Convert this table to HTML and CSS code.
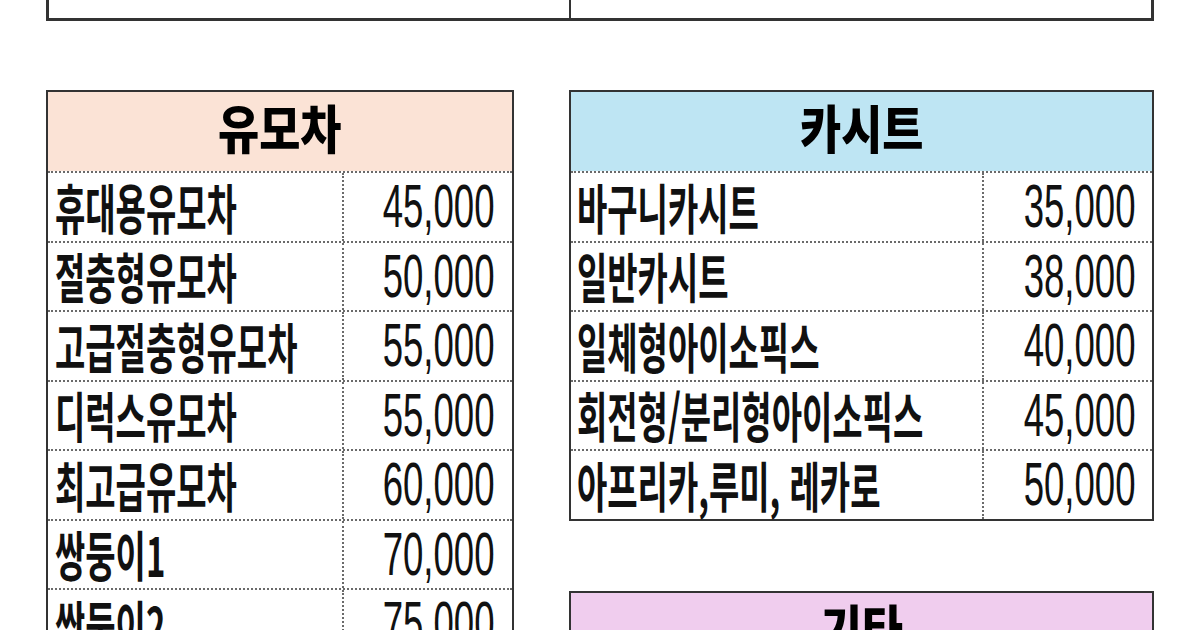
FILE: index.html
```html
<!DOCTYPE html>
<html lang="ko">
<head>
<meta charset="utf-8">
<title>가격표</title>
<link rel="stylesheet" href="styles.css">
</head>
<body>
<div class="sheet">
  <div class="topbox">
    <div class="tb-cell"></div>
    <div class="tb-cell tb-right"></div>
  </div>
  <div class="cols">
    <div class="col">
      <div class="tbl tbl-left">
        <div class="head head-peach"><span class="ht">유모차</span></div>
        <div class="row"><div class="lab"><span class="lt">휴대용유모차</span></div><div class="val"><span class="vt">45,000</span></div></div>
        <div class="row"><div class="lab"><span class="lt">절충형유모차</span></div><div class="val"><span class="vt">50,000</span></div></div>
        <div class="row"><div class="lab"><span class="lt">고급절충형유모차</span></div><div class="val"><span class="vt">55,000</span></div></div>
        <div class="row"><div class="lab"><span class="lt">디럭스유모차</span></div><div class="val"><span class="vt">55,000</span></div></div>
        <div class="row"><div class="lab"><span class="lt">최고급유모차</span></div><div class="val"><span class="vt">60,000</span></div></div>
        <div class="row"><div class="lab"><span class="lt">쌍둥이1</span></div><div class="val"><span class="vt">70,000</span></div></div>
        <div class="row"><div class="lab"><span class="lt">쌍둥이2</span></div><div class="val"><span class="vt">75,000</span></div></div>
      </div>
    </div>
    <div class="col">
      <div class="tbl tbl-right">
        <div class="head head-blue"><span class="ht">카시트</span></div>
        <div class="row"><div class="lab"><span class="lt">바구니카시트</span></div><div class="val"><span class="vt">35,000</span></div></div>
        <div class="row"><div class="lab"><span class="lt">일반카시트</span></div><div class="val"><span class="vt">38,000</span></div></div>
        <div class="row"><div class="lab"><span class="lt">일체형아이소픽스</span></div><div class="val"><span class="vt">40,000</span></div></div>
        <div class="row"><div class="lab"><span class="lt">회전형/분리형아이소픽스</span></div><div class="val"><span class="vt">45,000</span></div></div>
        <div class="row"><div class="lab"><span class="lt">아프리카,루미, 레카로</span></div><div class="val"><span class="vt">50,000</span></div></div>
      </div>
      <div class="tbl tbl-right tbl-etc">
        <div class="head head-purple"><span class="ht">기타</span></div>
      </div>
    </div>
  </div>
</div>
</body>
</html>
```

FILE: styles.css
```css
html, body {
  margin: 0;
  padding: 0;
  background: #ffffff;
}
body {
  width: 1200px;
  height: 630px;
  overflow: hidden;
  font-family: "Noto Sans CJK KR", "Liberation Sans", sans-serif;
  color: #111;
}
.sheet {
  padding: 0 46px;
}
.topbox {
  height: 21px;
  box-sizing: border-box;
  border: 3px solid #333;
  border-top: none;
  display: grid;
  grid-template-columns: 520px 1fr;
}
.tb-right {
  border-left: 2px solid #333;
}
.cols {
  margin-top: 69px;
  display: grid;
  grid-template-columns: 468px 585px;
  column-gap: 55px;
  align-items: start;
}
.col {
  display: flex;
  flex-direction: column;
  min-width: 0;
}
.tbl {
  border: 2px solid #333;
  background: #fff;
}
.tbl-etc {
  margin-top: 70px;
}
.head {
  height: 79px;
  box-sizing: border-box;
  padding-bottom: 10px;
  display: flex;
  align-items: center;
  justify-content: center;
}
.head-peach { background: #fbe3d6; }
.head-blue { background: #bee5f3; }
.head-purple { background: #f0cdee; }
.ht {
  display: inline-block;
  font-size: 52px;
  font-weight: 900;
  line-height: 1;
  transform: scaleX(0.86);
  color: #000;
}
.row {
  height: 69.5px;
  box-sizing: border-box;
  border-top: 2px dotted #6a6a6a;
  display: grid;
}
.tbl-left .row { grid-template-columns: 296px minmax(0, 1fr); }
.tbl-right .row { grid-template-columns: 413px minmax(0, 1fr); }
.lab {
  border-right: 2px dotted #6a6a6a;
  display: flex;
  align-items: center;
  padding-left: 7px;
  min-width: 0;
  white-space: nowrap;
}
.tbl-right .lab { padding-left: 6px; }
.val {
  display: flex;
  align-items: center;
  justify-content: flex-end;
  padding-right: 17px;
  min-width: 0;
  white-space: nowrap;
}
.tbl-right .val { padding-right: 16px; }
.lt {
  display: inline-block;
  font-size: 54px;
  font-weight: 700;
  line-height: 1;
  transform: scaleX(0.61);
  transform-origin: left center;
  flex-shrink: 0;
}
.vt {
  display: inline-block;
  font-family: "Liberation Sans", sans-serif;
  font-size: 61px;
  line-height: 1;
  transform: scaleX(0.6);
  transform-origin: right center;
  flex-shrink: 0;
}
```
